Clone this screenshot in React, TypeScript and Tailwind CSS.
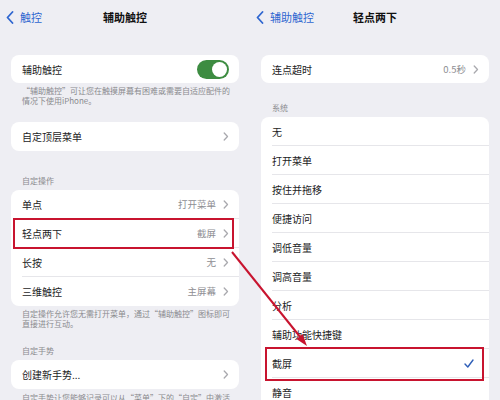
import type { ReactNode } from 'react'

const FONT = { fontFamily: '"Noto Sans CJK SC", "Noto Sans", sans-serif' }

function Chevron() {
  return (
    <svg width="6" height="9" viewBox="0 0 6 9" className="shrink-0">
      <path d="M1.2 1l3.3 3.5-3.3 3.5" fill="none" stroke="#a9a9ae" strokeWidth="1.3" strokeLinecap="round" strokeLinejoin="round" />
    </svg>
  )
}

function NavBar({ back, title }: { back: string; title: string }) {
  return (
    <div className="relative h-[35px] flex items-center">
      <div className="flex items-center gap-[6px] pl-[6px] text-[11px] text-[#2f66d0]">
        <svg width="8" height="13" viewBox="0 0 8 13">
          <path d="M6.5 1L1.5 6.5l5 5.5" fill="none" stroke="#2f66d0" strokeWidth="1.8" strokeLinecap="round" strokeLinejoin="round" />
        </svg>
        <span>{back}</span>
      </div>
      <div className="absolute inset-0 flex items-center justify-center text-[11px] font-semibold text-[#111]">
        {title}
      </div>
    </div>
  )
}

function Row({
  label,
  value,
  chevron = true,
  divider = true,
  right,
  children,
}: {
  label: string
  value?: string
  chevron?: boolean
  divider?: boolean
  right?: ReactNode
  children?: ReactNode
}) {
  return (
    <div className="relative h-[29px] flex items-center pl-[11px]">
      <div className={`flex-1 h-full flex items-center pr-[10px] ${divider ? 'border-b border-[#e6e6ea]' : ''}`}>
        <span className="flex-1 text-[10px] text-[#1c1c1e]">{label}</span>
        {value && <span className="text-[9.5px] text-[#8e8e93] mr-[7px]">{value}</span>}
        {chevron && <Chevron />}
        {right}
      </div>
      {children}
    </div>
  )
}

function Card({ children, className = '' }: { children: ReactNode; className?: string }) {
  return <div className={`mx-[11px] rounded-[8px] bg-white ${className}`}>{children}</div>
}

function Note({ children, className = '' }: { children: ReactNode; className?: string }) {
  return (
    <div className={`pl-[22px] whitespace-nowrap text-[8px] leading-[10px] text-[#8a8a8e] ${className}`}>
      {children}
    </div>
  )
}

function RedBox({ className }: { className: string }) {
  return <div className={`absolute border-2 border-[#c8142f] pointer-events-none ${className}`} />
}

function LeftPanel() {
  return (
    <div className="w-[250px] h-[400px] overflow-hidden bg-[#eeeef3]">
      <NavBar back="触控" title="辅助触控" />
      <Card className="mt-[20px]">
        <div className="h-[28px] flex items-center pl-[11px] pr-[10px]">
          <span className="flex-1 text-[10px] text-[#1c1c1e]">辅助触控</span>
          <div className="w-[32px] h-[19px] rounded-full bg-[#3d8c41] flex items-center justify-end pr-[2px]">
            <div className="w-[15px] h-[15px] rounded-full bg-white" />
          </div>
        </div>
      </Card>
      <Note className="mt-[3px]">
        “辅助触控”可让您在触摸屏幕有困难或需要自适应配件的
        <br />
        情况下使用iPhone。
      </Note>
      <Card className="mt-[16px]">
        <Row label="自定顶层菜单" divider={false} />
      </Card>
      <Note className="mt-[25px]">自定操作</Note>
      <Card className="mt-[4px]">
        <Row label="单点" value="打开菜单" />
        <Row label="轻点两下" value="截屏">
          <RedBox className="left-[2px] right-[5px] -top-[1px] -bottom-[1px]" />
        </Row>
        <Row label="长按" value="无" />
        <Row label="三维触控" value="主屏幕" divider={false} />
      </Card>
      <Note className="mt-[3px]">
        自定操作允许您无需打开菜单，通过“辅助触控”图标即可
        <br />
        直接进行互动。
      </Note>
      <Note className="mt-[17px]">自定手势</Note>
      <Card className="mt-[4px]">
        <Row label="创建新手势..." divider={false} />
      </Card>
      <Note className="mt-[4px]">自定手势让您能够记录可以从“菜单”下的“自定”中激活</Note>
    </div>
  )
}

function Check() {
  return (
    <svg width="10" height="9" viewBox="0 0 10 9" className="shrink-0 mr-[5px]">
      <path d="M1 5l2.8 3L9 1" fill="none" stroke="#2f5fb8" strokeWidth="1.4" strokeLinecap="round" strokeLinejoin="round" />
    </svg>
  )
}

function RightPanel() {
  const items = ['无', '打开菜单', '按住并拖移', '便捷访问', '调低音量', '调高音量', '分析', '辅助功能快捷键']
  return (
    <div className="w-[250px] h-[400px] overflow-hidden bg-[#eeeef3]">
      <NavBar back="辅助触控" title="轻点两下" />
      <Card className="mt-[20px]">
        <div className="h-[28px] flex items-center pl-[11px] pr-[10px]">
          <span className="flex-1 text-[10px] text-[#1c1c1e]">连点超时</span>
          <span className="text-[9.5px] text-[#8e8e93] mr-[7px]">0.5秒</span>
          <Chevron />
        </div>
      </Card>
      <Note className="mt-[20px]">系统</Note>
      <Card className="mt-[4px] rounded-b-none">
        {items.map((it) => (
          <Row key={it} label={it} chevron={false} />
        ))}
        <Row label="截屏" chevron={false} right={<Check />}>
          <RedBox className="left-[4px] right-[5px] -top-[2px] -bottom-[3px]" />
        </Row>
        <Row label="静音" chevron={false} />
      </Card>
    </div>
  )
}

export default function App() {
  return (
    <div className="relative w-[500px] h-[400px] flex overflow-hidden" style={FONT}>
      <LeftPanel />
      <RightPanel />
      {/* annotation arrow */}
      <svg className="absolute inset-0 pointer-events-none" width="500" height="400" viewBox="0 0 500 400">
        <line x1="232" y1="252" x2="301" y2="338" stroke="#c8142f" strokeWidth="2" />
        <polygon points="307,346 296.4,339.1 302.6,334.1" fill="#c8142f" />
      </svg>
    </div>
  )
}
